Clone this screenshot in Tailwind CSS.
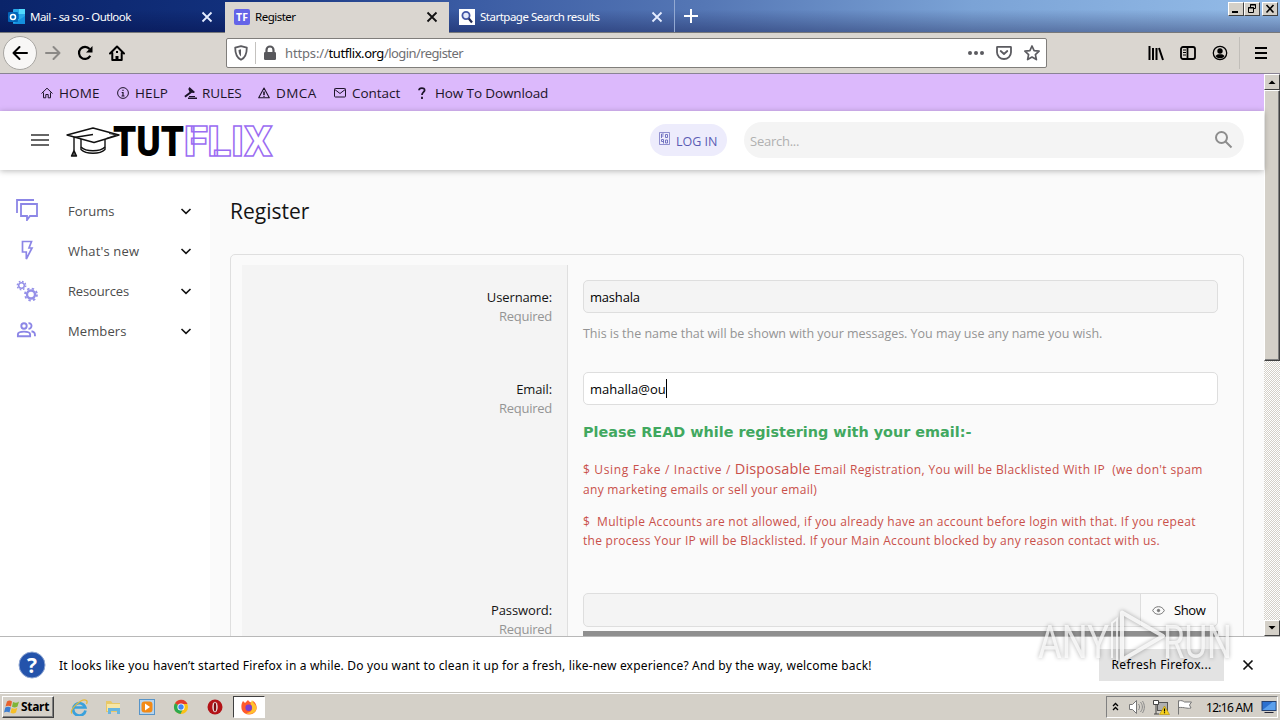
<!DOCTYPE html>
<html lang="en">
<head>
    <meta charset="UTF-8">
    <meta name="viewport" content="width=device-width, initial-scale=1.0">
    <title>Register | TutFlix</title>
    <script src="https://cdn.jsdelivr.net/npm/@tailwindcss/browser@4"></script>
</head>
<body class="relative w-[1280px] h-[720px] overflow-hidden flex flex-col whitespace-nowrap bg-white font-['Open_Sans','Noto_Sans',sans-serif] text-[13px] text-black">

    <!-- Tab strip -->
    <div class="h-[33px] shrink-0 flex border-b border-[#77787a] bg-[linear-gradient(to_bottom,rgba(0,0,40,0)_30%,rgba(0,0,50,0.32)),linear-gradient(to_right,#0a246a,#12307c_18%,#3a5ba3_36%,#5577b5_55%,#7ba3d6_76%,#94bce8)] font-['Noto_Sans',sans-serif] text-[11.5px] text-white">
        <div class="w-[225px] flex items-center pl-2 pt-0.5 pr-[12px]">
            <svg class="w-[18px] h-4" viewBox="0 0 18 16">
                <rect x="5" y="0" width="12" height="15" rx="1" fill="#28a8ea"/>
                <rect x="11" y="0" width="6" height="5" fill="#50d9ff"/>
                <rect x="5" y="5" width="6" height="5" fill="#0078d4"/>
                <path d="M5 15l12-8v8z" fill="#1490df"/>
                <rect x="0" y="3" width="10" height="10" rx="1" fill="#0364b8"/>
                <circle cx="5" cy="8" r="2.5" fill="none" stroke="#fff" stroke-width="1.5"/>
            </svg>
            <span class="ml-1 tracking-[-0.55px]">Mail - sa so - Outlook</span>
            <svg class="ml-auto w-3 h-3" viewBox="0 0 12 12"><path d="M1.500 1.500l9 9M10.500 1.500l-9 9" stroke="#e4ecff" stroke-width="1.800"/></svg>
        </div>
        <div class="w-[224px] h-[31px] mt-0.5 flex items-center pl-[9px] pr-[11px] pb-0.5 bg-[#dad6d0] text-black">
            <div class="w-4 h-4 rounded-[2px] bg-[#6464e8] text-white text-[10.5px] leading-4 font-bold text-center">TF</div>
            <span class="ml-[5px] pt-px tracking-[-0.5px]">Register</span>
            <svg class="ml-auto w-3 h-3" viewBox="0 0 12 12"><path d="M1.500 1.500l9 9M10.500 1.500l-9 9" stroke="#111" stroke-width="1.800"/></svg>
        </div>
        <div class="w-[226px] flex items-center pl-[10px] pt-0.5 pr-[11px] border-r border-[#93a9d2]">
            <svg class="w-4 h-4" viewBox="0 0 16 16"><rect width="16" height="16" fill="#fff"/><circle cx="7" cy="6.500" r="3.600" fill="#e4e9fa" stroke="#4557a5" stroke-width="1.800"/><path d="M9.800 9.500l3.200 4" stroke="#222b55" stroke-width="2.200"/></svg>
            <span class="ml-[5px] tracking-[-0.5px]">Startpage Search results</span>
            <svg class="ml-auto w-3 h-3" viewBox="0 0 12 12"><path d="M1.500 1.500l9 9M10.500 1.500l-9 9" stroke="#e4ecff" stroke-width="1.800"/></svg>
        </div>
        <svg class="ml-2 mt-2 w-4 h-4" viewBox="0 0 16 16"><path d="M8 1v14M1 8h14" stroke="#fff" stroke-width="2"/></svg>
        <!-- Window buttons -->
        <div class="ml-auto mr-0.5 mt-0.5 flex">
            <div class="w-4 h-[14px] bg-[#d4d0c8] border border-t-white border-l-white border-r-[#404040] border-b-[#404040]"><svg class="w-[14px] h-3" viewBox="0 0 14 12"><path d="M3 9h6" stroke="#000" stroke-width="2"/></svg></div>
            <div class="w-4 h-[14px] bg-[#d4d0c8] border border-t-white border-l-white border-r-[#404040] border-b-[#404040]"><svg class="w-[14px] h-3" viewBox="0 0 14 12" fill="none" stroke="#000"><path d="M5.500 4V1.500h5v4H8.500M5 2h6M3.500 4.500h5v5h-5zM3 5h6"/></svg></div>
            <div class="ml-0.5 w-4 h-[14px] bg-[#d4d0c8] border border-t-white border-l-white border-r-[#404040] border-b-[#404040]"><svg class="w-[14px] h-3" viewBox="0 0 14 12"><path d="M3.500 2l7 7.500M10.500 2l-7 7.500" stroke="#000" stroke-width="1.600"/></svg></div>
        </div>
    </div>

    <!-- Navigation toolbar -->
    <div class="h-[41px] shrink-0 flex items-center bg-[#dad6d0] border-b border-[#8a8494]">
        <div class="ml-[3px] w-[34px] h-[34px] rounded-full border border-[#a8a6a2] bg-[#f8f7f6] flex items-center justify-center">
            <svg class="w-4 h-4" viewBox="0 0 16 16" fill="none" stroke="#000" stroke-width="2" stroke-linecap="round" stroke-linejoin="round"><path d="M15 8H1.500M7.500 2L1.500 8l6 6"/></svg>
        </div>
        <svg class="ml-2 w-4 h-4" viewBox="0 0 16 16" fill="none" stroke="#8b8986" stroke-width="2" stroke-linecap="round" stroke-linejoin="round"><path d="M1 8h13.500M8.500 2l6 6-6 6"/></svg>
        <svg class="ml-4 w-4 h-4" viewBox="0 0 16 16" fill="none" stroke="#000" stroke-width="2.200"><path d="M13.300 10.800A6 6 0 1 1 12.600 4"/><path d="M15.500 1v6.500H9z" fill="#000" stroke="none"/></svg>
        <svg class="ml-4 w-4 h-4" viewBox="0 0 16 16" fill="none" stroke="#000" stroke-width="2" stroke-linejoin="round" stroke-linecap="round"><path d="M1 8.500l7-7 7 7M3.300 8v7h9.400V8"/><path d="M8 15v-4" stroke-width="3" stroke-linecap="butt"/><path d="M8 6v2" stroke-linecap="butt"/></svg>
        <div class="ml-[101px] w-[821px] h-[30px] flex items-center bg-white border border-[#807e7b] rounded-[2px]">
            <svg class="ml-[6px] w-4 h-4" viewBox="0 0 16 16" fill="none" stroke="#5b5b60" stroke-width="1.800" stroke-linejoin="round"><path d="M8 1.200l5.800 1.500c0 6-1.500 10-5.800 12.100C3.700 12.700 2.200 8.700 2.200 2.700z"/><path d="M8 4.300l-2.500.6c.1 3 .8 5 2.500 6.600z" fill="#5b5b60" stroke="none"/></svg>
            <div class="ml-[6px] w-px h-[22px] bg-[#c4c2bf]"></div>
            <svg class="ml-[6px] w-4 h-4" viewBox="0 0 16 16"><path d="M4.500 8V5a3.500 3.500 0 0 1 7 0v3" fill="none" stroke="#58585c" stroke-width="2.200"/><rect x="2" y="7" width="12" height="8" rx="1.200" fill="#58585c"/></svg>
            <span class="ml-[7px] pt-px font-['Noto_Sans',sans-serif] text-[13px] tracking-[-0.43px] text-[#6f6f72]"><span class="tracking-[-0.15px]">https://</span><span class="text-black">tutflix.org</span><span class="tracking-[-0.58px]">/login/register</span></span>
            <svg class="ml-auto w-4 h-4" viewBox="0 0 16 16" fill="#5b5b60"><circle cx="2" cy="8" r="2"/><circle cx="8" cy="8" r="2"/><circle cx="14" cy="8" r="2"/></svg>
            <svg class="ml-3 w-4 h-4" viewBox="0 0 16 16" fill="none" stroke="#5b5b60" stroke-width="1.800" stroke-linecap="round" stroke-linejoin="round"><path d="M1.500 1.800h13c.3 0 .5.200.5.500v5a7 6.700 0 0 1-14 0v-5c0-.3.200-.5.500-.5z"/><path d="M4.700 6L8 9l3.300-3"/></svg>
            <svg class="ml-3 mr-[6px] w-4 h-4" viewBox="0 0 16 16" fill="none" stroke="#5b5b60" stroke-width="1.700" stroke-linejoin="round"><path d="M8 1l2.100 4.600 5 .6-3.700 3.400 1 5L8 12.100l-4.400 2.500 1-5L.9 6.200l5-.6z"/></svg>
        </div>
        <svg class="ml-[101px] w-4 h-4" viewBox="0 0 16 16" stroke="#000" stroke-width="2"><path d="M1.500 1v14M5 3v12M8.500 3v12M11 3l4 12"/></svg>
        <svg class="ml-4 w-4 h-4" viewBox="0 0 16 16" fill="none" stroke="#000" stroke-width="1.800"><rect x="1" y="2" width="14" height="12" rx="2"/><path d="M7.500 2v12"/><path d="M3 5h3M3 7.500h3M3 10h3" stroke-width="1"/></svg>
        <svg class="ml-4 w-4 h-4" viewBox="0 0 16 16"><circle cx="8" cy="8" r="6.700" fill="none" stroke="#000" stroke-width="1.300"/><circle cx="8" cy="6" r="2.700"/><path d="M3.500 11c1-1.500 2.500-1.800 4.500-1.800s3.500.3 4.500 1.800c-1 1.400-2.500 2.300-4.500 2.300S4.500 12.400 3.500 11z"/></svg>
        <div class="ml-[11px] w-px h-8 bg-[#c1beb9]"></div>
        <svg class="ml-[13px] w-4 h-4" viewBox="0 0 16 16" stroke="#000" stroke-width="2"><path d="M2 3h12M2 8h12M2 13h12"/></svg>
    </div>

    <!-- Web page and scrollbar -->
    <div class="h-[562px] shrink-0 flex overflow-hidden">
        <div class="w-[1264px] flex flex-col">
            <nav class="h-[37px] shrink-0 flex items-center pl-[41px] pt-0.5 bg-[#dcb9fc] text-[13.5px] tracking-[0.1px] text-[#1d1429]">
                <a class="w-[76px] flex items-center gap-[6px]">
                    <svg class="w-3 h-3 mb-0.5" viewBox="0 0 12 12" fill="none" stroke="currentColor"><path d="M.5 6.500L6 1.200l5.500 5.300M2.500 5.500v5.300h2.300V7.500h2.400v3.300h2.300V5.500"/></svg>
                    HOME
                </a>
                <a class="w-[67px] flex items-center gap-[6px]">
                    <svg class="w-3 h-3 mb-0.5" viewBox="0 0 12 12" fill="none" stroke="currentColor"><circle cx="6" cy="6" r="5.400"/><path d="M6 2.700v1.400M6 5v4M4.700 5.500H6M4.500 9h3" stroke-width="1.200"/></svg>
                    HELP
                </a>
                <a class="w-[74px] flex items-center gap-[5px]">
                    <svg class="w-[13px] h-3 mb-0.5" viewBox="0 0 13 12" fill="currentColor"><path d="M5.500 0l5.500 5-1.200 1L7.800 5.800 1.500 10.500.3 9l5.200-4L4.300 2z"/><path d="M5 9h6v1H5zM4 10.500h9V12H4z"/></svg>
                    <span class="tracking-[-0.1px]">RULES</span>
                </a>
                <a class="w-[76px] flex items-center gap-[6px]">
                    <svg class="w-3 h-3 mb-0.5" viewBox="0 0 12 12" fill="none" stroke="currentColor" stroke-width="1.100" stroke-linejoin="round"><path d="M6 1l5.300 9.800H.7z"/><path d="M6 4.500V8M6 8.700v1" stroke-width="1.600"/></svg>
                    <span class="tracking-[0.4px]">DMCA</span>
                </a>
                <a class="w-[84px] flex items-center gap-[6px]">
                    <svg class="w-3 h-3 mb-0.5" viewBox="0 0 12 12" fill="none" stroke="currentColor"><rect x=".5" y="1.500" width="11" height="8.500" rx=".8"/><path d="M.8 2.500L6 6.500l5.200-4"/></svg>
                    <span class="tracking-[-0.05px]">Contact</span>
                </a>
                <a class="flex items-center gap-[9px]">
                    <svg class="w-[8px] h-3 mb-0.5" viewBox="0 0 8 12" fill="none" stroke="currentColor" stroke-width="1.800"><path d="M1 3.200C1.200.5 6.600.3 6.600 3.200c0 2-2.600 2-2.600 4.800M4 9.800V12"/></svg>
                    <span class="tracking-[-0.12px]">How To Download</span>
                </a>
            </nav>

            <header class="relative z-10 h-[59px] shrink-0 flex items-center pl-[31px] pr-5 pb-0.5 bg-white shadow-[0_1px_6px_rgba(0,0,0,0.28)]">
                <svg class="w-[18px] h-3" viewBox="0 0 18 12" fill="#666"><path d="M0 0h18v2H0zM0 5h18v2H0zM0 10h18v2H0z"/></svg>
                <svg class="ml-[15px] w-[212px] h-[57px]" viewBox="0 -7 212 57">
                    <!-- graduation cap -->
                    <g transform="translate(0 1.5)" fill="#fff" stroke="#111" stroke-width="1.400" stroke-linejoin="round">
                        <path d="M17 19v11c5 5 19 5 24 0V19z"/>
                        <path d="M17 27.500c5 5 19 5 24 0" fill="none"/>
                        <path d="M3 15.500L29 8.500l26 7L30 23z"/>
                        <path d="M29 15L10 18v13" fill="none"/>
                        <path d="M45 14l7 1.500-10 3.500" fill="none" stroke-width=".8"/>
                        <path d="M10 31l-2.500 5.500h5z" fill="#555"/>
                    </g>
                    <text x="49" y="38" textLength="71" lengthAdjust="spacingAndGlyphs" font-family="Roboto" font-weight="900" font-size="43" fill="#000">TUT</text>
                    <text x="120" y="37.500" textLength="88" lengthAdjust="spacingAndGlyphs" font-family="Roboto" font-weight="900" font-size="42" fill="#fff" stroke="#9b6cf2" stroke-width="1.500">FLIX</text>
                </svg>
                <div class="ml-auto w-[77px] h-8 rounded-full bg-[#edecfc] flex items-center pl-[9px] text-[12.5px] text-[#5a5cb4]">
                    <svg class="w-[11px] h-[13px] mb-0.5" viewBox="0 0 11 13" fill="none" stroke="#6769bb"><path d="M.5.5h10v12H.5z" stroke-width=".7"/><path d="M2.500 6V2h2.300M2.500 4h2M6.500 2.500h2v3h-2zM4.500 11.500v-4h-2v2h2M6.500 8h2v3h-2z" stroke-width=".9"/></svg>
                    <span class="ml-[6px] pt-[5px]">LOG IN</span>
                </div>
                <div class="ml-[17px] w-[500px] h-9 rounded-full bg-[#f4f4f4] flex items-center pl-[6px] pr-[11px] text-[#b0b0b0]">
                    <span class="pt-1 tracking-[-0.25px]">Search...</span>
                    <svg class="ml-auto w-[19px] h-[19px]" viewBox="0 0 19 19" fill="none" stroke="#8d8d8d" stroke-width="2"><circle cx="7.500" cy="7.500" r="5.500"/><path d="M11.500 11.500l6 6"/></svg>
                </div>
            </header>

            <div class="flex h-[466px]">
                <!-- Sidebar -->
                <aside class="w-[210px] shrink-0 pt-[21px] pl-4 pr-[18px] bg-white text-[#4c4c4c] tracking-[0.1px]">
                    <a class="h-10 flex items-center">
                        <svg class="w-[22px] h-[22px] mb-0.5" viewBox="0 0 22 22" fill="none" stroke="#8c86e6" stroke-width="1.800"><path d="M1 14V1h17"/><path d="M5 5h16v12h-7l-3 4v-4H5z"/></svg>
                        <span class="ml-[30px] pt-0.5">Forums</span>
                        <svg class="ml-auto w-3 h-[7px]" viewBox="0 0 12 7" fill="none" stroke="#111" stroke-width="1.600"><path d="M1.500 1L6 5.300 10.500 1"/></svg>
                    </a>
                    <a class="h-10 flex items-center">
                        <svg class="w-[22px] h-[22px]" viewBox="0 0 22 22" fill="none" stroke="#8c86e6" stroke-width="1.700"><path d="M6.500 1.500h9L13 8h3L10.300 19v-7H6.500z"/></svg>
                        <span class="ml-[30px] pt-0.5 tracking-[0.15px]">What's new</span>
                        <svg class="ml-auto w-3 h-[7px]" viewBox="0 0 12 7" fill="none" stroke="#111" stroke-width="1.600"><path d="M1.500 1L6 5.300 10.500 1"/></svg>
                    </a>
                    <a class="h-10 flex items-center">
                        <svg class="w-[22px] h-[22px]" viewBox="0 0 22 22" fill="none" stroke="#9590e8"><circle cx="5.500" cy="5.500" r="2.800" stroke-width="1.500"/><circle cx="5.500" cy="5.500" r="4.200" stroke-width="1.400" stroke-dasharray="1.650 1.650"/><circle cx="15" cy="14.500" r="4" stroke-width="2.400"/><circle cx="15" cy="14.500" r="6" stroke-width="1.800" stroke-dasharray="2.360 2.360"/></svg>
                        <span class="ml-[30px] pt-0.5 tracking-[-0.15px]">Resources</span>
                        <svg class="ml-auto w-3 h-[7px]" viewBox="0 0 12 7" fill="none" stroke="#111" stroke-width="1.600"><path d="M1.500 1L6 5.300 10.500 1"/></svg>
                    </a>
                    <a class="h-10 flex items-center">
                        <svg class="w-[22px] h-[22px] mb-0.5" viewBox="0 0 22 22" fill="none" stroke="#8c86e6" stroke-width="1.900"><circle cx="8" cy="7" r="2.700"/><path d="M1.900 17.200v-2c0-3.500 12.200-3.500 12.200 0v2zM12.500 4.300c4-.5 4 5.500 0 5.400M15.500 12.300c3 .6 3.500 1.700 3.500 5"/></svg>
                        <span class="ml-[30px] pt-0.5">Members</span>
                        <svg class="ml-auto w-3 h-[7px]" viewBox="0 0 12 7" fill="none" stroke="#111" stroke-width="1.600"><path d="M1.500 1L6 5.300 10.500 1"/></svg>
                    </a>
                </aside>

                <main class="grow flex flex-col bg-[#fafafa] pl-5 pr-5">
                    <h1 class="mt-[26px] text-[21px] leading-[30px] text-[#141414]">Register</h1>
                    <div class="mt-7 h-[420px] shrink-0 flex border border-[#dfdfdf] rounded-[5px] pt-[10px] pl-[11px]">
                        <!-- Label column -->
                        <div class="w-[326px] shrink-0 pt-[23px] pr-[15px] bg-[#f4f4f4] border-r border-[#dfdfdf] text-right leading-[19px] tracking-[-0.12px] text-[#141414]">
                            <div class="h-[92px]">Username:<div class="text-[#949494] tracking-[-0.25px]">Required</div></div>
                            <div class="h-[221px]">Email:<div class="text-[#949494] tracking-[-0.25px]">Required</div></div>
                            <div>Password:<div class="text-[#949494] tracking-[-0.25px]">Required</div></div>
                        </div>
                        <!-- Field column -->
                        <div class="w-[635px] ml-[15px] pt-[15px]">
                            <div class="h-[33px] flex items-center pl-[6px] pt-0.5 bg-[#f4f4f4] border border-[#dedede] rounded-[5px] tracking-[-0.2px]">mashala</div>
                            <p class="mt-[11px] leading-5 text-[#949494] text-[12.5px] tracking-[-0.02px]">This is the name that will be shown with your messages. You may use any name you wish.</p>
                            <div class="mt-7 h-[33px] flex items-center pl-[6px] bg-white border border-[#dedede] rounded-[5px]"><span class="pt-0.5">mahalla@ou</span><span class="w-px h-[19px] bg-black"></span></div>
                            <p class="mt-[17px] leading-5 font-['DejaVu_Sans',Verdana,sans-serif] font-bold text-[14.4px] text-[#41a85f]">Please READ while registering with your email:-</p>
                            <p class="mt-[17px] h-10 leading-5 text-[12px] tracking-[0.37px] text-[#c9504a]"><span class="tracking-[0.65px]">$ Using Fake / Inactive / </span><span class="text-[14.5px] tracking-[0.15px]">Disposable</span> Email Registration, You will be Blacklisted With IP&nbsp; (we don't spam<br><span class="tracking-[0.3px]">any marketing emails or sell your email)</span></p>
                            <p class="mt-[13px] leading-[19px] text-[12px] tracking-[0.32px] text-[#c9504a]">$&nbsp; Multiple Accounts are not allowed, if you already have an account before login with that. If you repeat<br><span class="tracking-[0.27px]">the process Your IP will be Blacklisted. If your Main Account blocked by any reason contact with us.</span></p>
                            <div class="mt-[43px] h-[34px] flex bg-[#f4f4f4] border border-[#dedede] rounded-[5px]">
                                <div class="grow"></div>
                                <div class="w-[77px] flex items-center pl-[11px] border-l border-[#dedede] bg-[#fafafa] rounded-r-[5px]">
                                    <svg class="w-[13px] h-[9px]" viewBox="0 0 13 9" fill="none" stroke="#777"><path d="M.7 4.500C3-.6 10-.6 12.300 4.500 10 9.600 3 9.600.7 4.500z"/><circle cx="6.500" cy="4.500" r="1.200" fill="#777"/></svg>
                                    <span class="ml-[9px] pt-px tracking-[-0.4px]">Show</span>
                                </div>
                            </div>
                            <div class="mt-1 h-[5px] bg-[#8f8f8f]"></div>
                        </div>
                    </div>
                </main>
            </div>
        </div>

        <!-- Scrollbar -->
        <div class="w-4 flex flex-col bg-[repeating-conic-gradient(#d4d0c8_0_25%,#fff_0_50%)] bg-[length:2px_2px]">
            <div class="h-4 shrink-0 bg-[#d4d0c8] border border-t-white border-l-white border-r-[#404040] border-b-[#404040]"><svg class="w-[14px] h-[14px]" viewBox="0 0 14 14"><path d="M3.500 9L7 5.500 10.500 9z"/></svg></div>
            <div class="h-[271px] shrink-0 bg-[#d4d0c8] border border-t-white border-l-white border-r-[#404040] border-b-[#404040] shadow-[inset_-1px_-1px_#808080]"></div>
            <div class="mt-auto h-4 shrink-0 bg-[#d4d0c8] border border-t-white border-l-white border-r-[#404040] border-b-[#404040]"><svg class="w-[14px] h-[14px]" viewBox="0 0 14 14"><path d="M3.500 5L7 8.500 10.500 5z"/></svg></div>
        </div>
    </div>

    <!-- Notification bar -->
    <div class="h-[57px] shrink-0 flex items-center pl-[18px] pr-[26px] border-t border-[#b8b8b8] bg-white font-['Noto_Sans',sans-serif] text-[12px]">
        <svg class="w-7 h-7" viewBox="0 0 28 28"><circle cx="14" cy="14" r="13" fill="#2453ab" stroke="#8fa6d2"/><text x="14" y="21.500" text-anchor="middle" font-family="Open Sans" font-weight="700" font-size="21" fill="#fff">?</text></svg>
        <span class="ml-[13px] pt-0.5 tracking-[0.17px]">It looks like you haven’t started Firefox in a while. Do you want to clean it up for a fresh, like-new experience? And by the way, welcome back!</span>
        <div class="ml-auto w-[125px] h-8 flex items-center justify-center bg-[#e3e3e3] tracking-[0.33px]">Refresh Firefox...</div>
        <svg class="ml-[18px] w-3 h-3" viewBox="0 0 12 12"><path d="M1.500 1.500l9 9M10.500 1.500l-9 9" stroke="#111" stroke-width="1.700"/></svg>
    </div>

    <!-- Taskbar -->
    <div class="h-[27px] shrink-0 flex items-center pl-0.5 pr-0.5 bg-[#d4d0c8] border-t border-white shadow-[0_-1px_#c6c4be] font-['Noto_Sans',sans-serif]">
        <div class="w-[52px] h-[22px] flex items-center pl-px bg-[#d4d0c8] border border-t-white border-l-white border-r-[#404040] border-b-[#404040] shadow-[inset_-1px_-1px_#808080]">
            <svg class="w-4 h-4" viewBox="0 0 16 16"><path d="M3 2.500c2-1.500 3.500-1 5 0L7 7.500c-2-1-3.500-1-5.500 0z" fill="#e8622c"/><path d="M9 3c2 1 4 1 6-.500L13.500 7.500c-2 1.300-3.500 1.200-5.500.300z" fill="#7fb537"/><path d="M1.300 8.500c2-1 3.500-1 5.500 0L5.500 13.500c-2-1-3.500-1-5.500 0z" fill="#3d7ed0"/><path d="M7.700 9c2 1 3.700 1 5.600-.300L12 13.500c-2 1.300-3.500 1.200-5.500.300z" fill="#f6bf27"/></svg>
            <span class="ml-px text-[12px] font-bold tracking-[-0.3px]">Start</span>
        </div>
        <svg class="ml-4 w-[18px] h-[18px]" viewBox="0 0 18 18" fill="none"><path d="M15.500 12.500A6.200 6.200 0 1 1 15.300 9.500H4" stroke="#3aa1dc" stroke-width="2.700"/><path d="M2 15.500C-1 12 12-1 16.500 2.500c1 1 .5 2.500 0 3.500" stroke="#e5b93a" stroke-width="1.300"/></svg>
        <svg class="ml-4 w-[18px] h-[18px]" viewBox="0 0 18 18"><path d="M2 3h5l1.500 2H16v9H2z" fill="#e8c868"/><path d="M3 6h13v7H3z" fill="#f7e6a5"/><path d="M4 10h12v6h-3v-3H7v3H4z" fill="#68b5df"/></svg>
        <svg class="ml-[17px] w-4 h-4" viewBox="0 0 16 16"><rect x=".5" y=".5" width="15" height="15" fill="#b7d4ed" stroke="#5794c8"/><rect x="2.500" y="2.500" width="11" height="11" rx="3" fill="#f38a16"/><path d="M6 4.500l5 3.500-5 3.500z" fill="#fff"/></svg>
        <svg class="ml-[18px] w-4 h-4" viewBox="0 0 16 16"><circle cx="8" cy="8" r="7" fill="#fbc116"/><path d="M8 8L2 4.300A7 7 0 0 1 14.500 5H8z" fill="#e33b2e"/><path d="M8 8L2 4.300A7 7 0 0 0 7.500 15l2.500-5z" fill="#2da94f"/><circle cx="8" cy="8" r="3.600" fill="#fff"/><circle cx="8" cy="8" r="2.700" fill="#4285f4"/></svg>
        <svg class="ml-[18px] w-4 h-4" viewBox="0 0 16 16"><circle cx="8" cy="8" r="7.500" fill="#b31217"/><ellipse cx="8" cy="8" rx="2.700" ry="5.300" fill="#e9dede"/><ellipse cx="8" cy="8" rx="1.200" ry="4.500" fill="#7c0a0e"/></svg>
        <div class="ml-[10px] w-[32px] h-[22px] flex items-center justify-center bg-white border border-t-[#404040] border-l-[#404040] border-r-white border-b-white">
            <svg class="w-4 h-4" viewBox="0 0 16 16"><path d="M2 2l2 2 3-3c1 2 3 2 4 3l1-2c3 2 4 5 3.500 8C14 17 3 17.500.7 10.500 0 7 .5 4 2 2z" fill="#ff5a2c"/><path d="M11 1c1 3 4.500 4.500 4.500 8.500C15 14 9 16.500 4.500 14c5 0 9-4 5-9z" fill="#ffc22e"/><circle cx="7.700" cy="8.700" r="3.300" fill="#7a3fd0"/></svg>
        </div>
        <!-- Tray -->
        <div class="ml-auto w-[172px] h-[22px] flex items-center border border-t-[#808080] border-l-[#808080] border-r-white border-b-white">
            <svg class="ml-[5px] w-[7px] h-[9px] mb-0.5" viewBox="0 0 7 9" fill="none" stroke="#000" stroke-width="1.300"><path d="M1 4l2.500-2.500L6 4M1 8l2.500-2.500L6 8"/></svg>
            <svg class="ml-[9px] w-[17px] h-4" viewBox="0 0 17 16"><path d="M1.500 5.500h3l4-4v13l-4-4h-3z" fill="#fff" stroke="#777"/><path d="M10.500 5c1.500 2 1.500 4 0 6M12.500 3c2.500 3.500 2.500 6.500 0 10M14.500 2c2.500 4 2.500 8 0 12" fill="none" stroke="#8a8a8a"/></svg>
            <svg class="ml-2 w-[17px] h-4" viewBox="0 0 17 16"><rect x="4.500" y="3.500" width="10" height="8" fill="#b0b0b0" stroke="#555"/><path d="M.5 1.500h5v4h-5zM3 6v9M1 15h5" fill="#fff" stroke="#444"/><path d="M11.500 7l5 8.500h-10z" fill="#f8d21c" stroke="#b08c00" stroke-width=".6"/><path d="M11.500 9.500v3M11.500 13.300v1" stroke="#000" stroke-width="1.200"/></svg>
            <svg class="ml-[7px] w-4 h-4" viewBox="0 0 16 16" fill="#fff" stroke="#777"><path d="M1.500 1.500v14M1.500 2c3-1 4.500 0 6 1h7l-2 3 1.500 3c-4 1-6-1-12.500-.500z"/></svg>
            <span class="ml-[13px] pt-px text-[12px] tracking-[-0.7px]">12:16 AM</span>
            <svg class="ml-auto w-4 h-[14px]" viewBox="0 0 15 14"><rect x=".5" y="1.500" width="14" height="9" fill="#2b70cf" stroke="#24406f"/><path d="M1 10L11 2h3v8z" fill="#5ba0ec"/><path d="M3 12h9v1H3z" fill="#223"/></svg>
        </div>
    </div>

    <!-- Watermark over the lower right corner -->
    <svg class="absolute left-[1030px] top-[600px] w-[210px] h-[76px] drop-shadow-[0_0_2px_rgba(0,0,0,0.4)]" viewBox="0 0 210 76">
        <text x="8" y="58" textLength="71" lengthAdjust="spacingAndGlyphs" font-family="Roboto" font-size="47" fill="#fff" fill-opacity=".75">ANY</text>
        <text x="133" y="58" textLength="69" lengthAdjust="spacingAndGlyphs" font-family="Roboto" font-size="47" fill="#fff" fill-opacity=".75">RUN</text>
        <path d="M92 12.500L133 36 92 60z" fill="none" stroke="#fff" stroke-opacity=".8" stroke-width="4" stroke-linejoin="round"/>
        <path d="M82 58V23l5-4v42" fill="none" stroke="#fff" stroke-opacity=".75" stroke-width="2"/>
    </svg>
</body>
</html>
